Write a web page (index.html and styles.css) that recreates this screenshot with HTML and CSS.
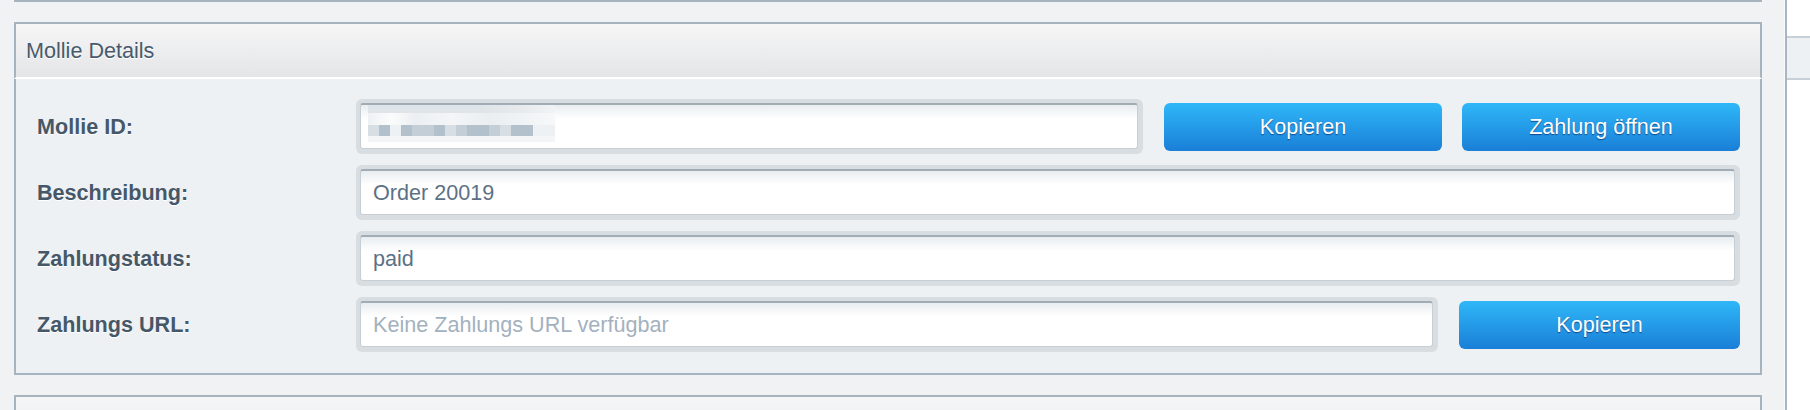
FILE: index.html
```html
<!DOCTYPE html>
<html lang="de">
<head>
<meta charset="utf-8">
<title>Mollie Details</title>
<link rel="stylesheet" href="styles.css">
</head>
<body>
<div class="page">
  <main class="main">
    <div class="prev-panel"></div>

    <section class="panel">
      <header class="panel-head">Mollie Details</header>
      <div class="panel-body">
        <div class="label">Mollie ID:</div>
        <div class="controls">
          <div class="field">
            <div class="input input-blur">
              <div class="blur">
                <div class="blur-row r1"></div>
                <div class="blur-row r2"></div>
                <div class="blur-row r3">
                  <span class="c3"></span><span class="c1"></span><span class="c4"></span><span class="c1"></span><span class="c2"></span><span class="c2"></span><span class="c1"></span><span class="c3"></span><span class="c2"></span><span class="c1"></span><span class="c1"></span><span class="c2"></span><span class="c3"></span><span class="c1"></span><span class="c1"></span><span class="c4"></span><span class="c4"></span>
                </div>
                <div class="blur-row r4"></div>
              </div>
            </div>
          </div>
          <button class="btn btn-sm">Kopieren</button>
          <button class="btn btn-sm">Zahlung öffnen</button>
        </div>

        <div class="label">Beschreibung:</div>
        <div class="controls">
          <div class="field"><div class="input">Order 20019</div></div>
        </div>

        <div class="label">Zahlungstatus:</div>
        <div class="controls">
          <div class="field"><div class="input">paid</div></div>
        </div>

        <div class="label">Zahlungs URL:</div>
        <div class="controls">
          <div class="field"><div class="input placeholder">Keine Zahlungs URL verfügbar</div></div>
          <button class="btn btn-lg">Kopieren</button>
        </div>
      </div>
    </section>

    <section class="panel next">
      <header class="panel-head"></header>
    </section>
  </main>
  <aside class="sidebar">
    <div class="side-band"></div>
  </aside>
</div>
</body>
</html>
```

FILE: styles.css
```css
html, body {
  margin: 0;
  padding: 0;
}
body {
  background: #f0f2f4;
  font-family: "Liberation Sans", Arial, sans-serif;
  font-size: 21.6px;
  width: 1810px;
  height: 410px;
  overflow: hidden;
}
.page {
  display: flex;
  height: 410px;
  overflow: hidden;
}
.main {
  width: 1785px;
  box-sizing: border-box;
  padding: 0 22px 0 14px;
  border-right: 1px solid #f9fafb;
  display: flex;
  flex-direction: column;
  gap: 20px;
}
.prev-panel {
  height: 0;
  border-bottom: 2px solid #a6b4c0;
}
.panel {
  display: flex;
  flex-direction: column;
}
.panel-head {
  height: 52px;
  border: 2px solid #a6b4c0;
  border-bottom: 2px solid #ffffff;
  background: linear-gradient(#f6f6f7, #e4e5e7);
  color: #485a6b;
  text-shadow: 0 1px 0 #ffffff;
  display: flex;
  align-items: center;
  padding-left: 10px;
  padding-top: 1px;
}
.panel-body {
  border: 2px solid #a6b4c0;
  border-top: 0;
  background: #eef1f4;
  padding: 20px 20px 21px 21px;
  display: grid;
  grid-template-columns: 319px 1fr;
  row-gap: 11px;
  align-items: center;
}
.label {
  font-weight: bold;
  color: #465868;
  text-shadow: 0 1px 0 #ffffff;
}
.controls {
  display: flex;
  align-items: center;
}
.field {
  flex: 1;
  background: #d8dde1;
  border-radius: 6px;
  padding: 4px 5px 5px 4px;
  height: 46px;
}
.input {
  box-sizing: border-box;
  height: 46px;
  background: linear-gradient(#e9edf0, #ffffff 14px);
  border: 1px solid #c8cfd4;
  border-top: 2px solid #a2acb5;
  border-radius: 3px;
  display: flex;
  align-items: center;
  padding: 0 12px;
  color: #5c7186;
}
.placeholder {
  color: #a3b1be;
}
.input-blur {
  align-items: flex-start;
  padding-left: 7px;
}
.blur {
  width: 187px;
  display: flex;
  flex-direction: column;
}
.r1 {
  height: 8px;
  background: linear-gradient(90deg, #dfe4e8 0%, #dfe4e8 60%, #e6eaed 80%, #f1f3f5 100%);
}
.r2 {
  height: 12px;
  background: linear-gradient(90deg, #eef1f3 0%, #fbfcfc 12%, #eceff2 25%, #f3f5f7 45%, #eaeef1 65%, #f6f8f9 100%);
}
.r3 {
  height: 11px;
  display: flex;
}
.r3 span {
  width: 11px;
  height: 11px;
}
.c1 { background: #b3c1cc; }
.c2 { background: #c4ced6; }
.c3 { background: #d8dfe4; }
.c4 { background: #eef1f3; }
.r4 {
  height: 6px;
  background: #f3f5f7;
}
.btn {
  margin-left: 20px;
  height: 48px;
  border: 0;
  border-radius: 6px;
  background: linear-gradient(#2fb7f8, #1a7fd7);
  color: #ffffff;
  font-family: "Liberation Sans", Arial, sans-serif;
  font-size: 21.6px;
  text-shadow: 0 1px 1px rgba(10, 50, 110, 0.75);
  padding: 0;
  flex: none;
}
.btn-sm {
  width: 278px;
}
.controls .btn-sm:first-of-type {
  margin-left: 21px;
}
.btn-lg {
  width: 281px;
  margin-left: 21px;
}
.next .panel-head {
  height: 12px;
  border-bottom: 0;
  background: linear-gradient(#f6f6f7, #f2f3f4);
}
.sidebar {
  flex: 1;
  border-left: 2px solid #a9b6c2;
  background: #ffffff;
  padding-top: 36px;
}
.side-band {
  height: 40px;
  border-top: 2px solid #c8d0d7;
  border-bottom: 2px solid #c8d0d7;
  background: #eef1f3;
}
```
